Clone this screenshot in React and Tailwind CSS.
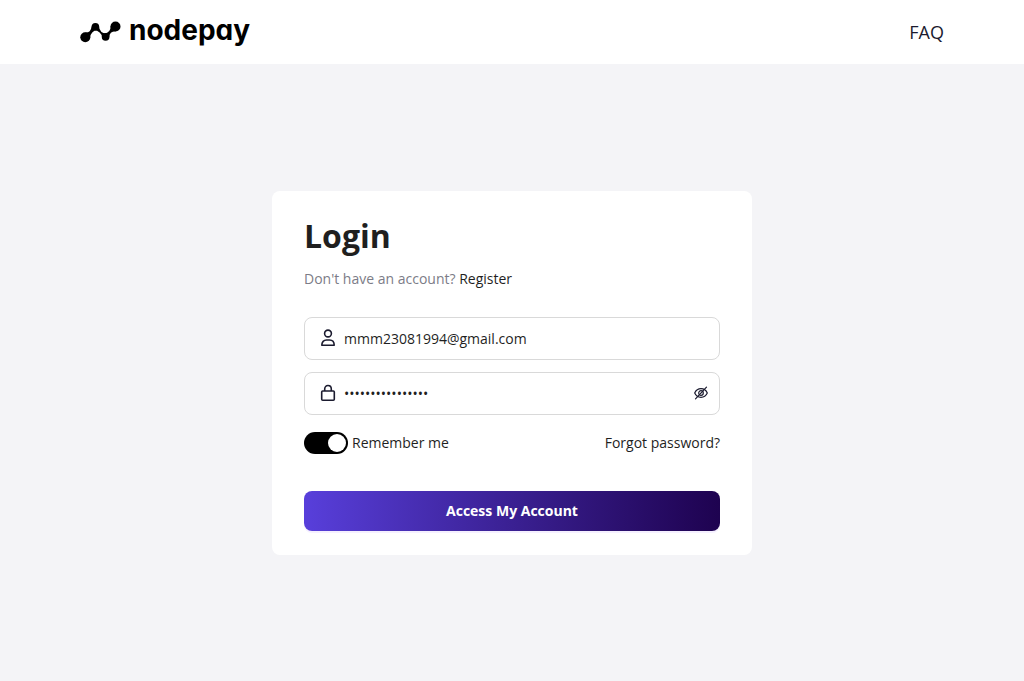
import { useState } from "react";

function Logo() {
  return (
    <a href="/" aria-label="nodepay" className="flex items-center gap-2 text-black">
      <svg width="41" height="22" viewBox="0 0 41 22" fill="currentColor" aria-hidden="true">
        <circle cx="5.3" cy="16.3" r="5" />
        <circle cx="15.4" cy="5.7" r="3.8" />
        <circle cx="25.6" cy="16" r="3.8" />
        <circle cx="35.5" cy="5.5" r="5" />
        <path d="M4.500 11.600Q10.500 12.500 11.700 5.500L18 8.500Q10.500 10 10 17Z" />
        <path d="M19 5.500Q19.500 12 26.500 12.500L22 16.500Q21.500 10 13.500 9Z" />
        <path d="M24.500 12.500Q30.500 12 30.800 5L36 10.300Q29.500 10 29.200 16.500Z" />
      </svg>
      <span className="pb-1 font-['Inter',sans-serif] text-[28px] leading-8 font-bold [font-feature-settings:'cv11']">
        nodepay
      </span>
    </a>
  );
}

function UserIcon() {
  return (
    <svg width="16" height="18" viewBox="0 0 16 18" fill="none" stroke="#1b1b2f" strokeWidth="1.6" strokeLinejoin="round" aria-hidden="true">
      <circle cx="8" cy="4.500" r="3.400" />
      <path d="M1.800 16.200C1.800 12.800 3.800 11 6.500 11H9.500C12.200 11 14.200 12.800 14.200 16.200Z" />
    </svg>
  );
}

function LockIcon() {
  return (
    <svg width="16" height="18" viewBox="0 0 16 18" fill="none" stroke="#1b1b2f" strokeWidth="1.6" strokeLinejoin="round" aria-hidden="true">
      <rect x="1.700" y="7" width="12.600" height="9.300" rx="1" />
      <path d="M4.700 7V5C4.700 2.900 6.100 1.500 8 1.500S11.300 2.900 11.300 5V7" />
    </svg>
  );
}

function EyeOffIcon() {
  return (
    <svg width="14" height="14" viewBox="0 0 14 14" fill="none" stroke="#1b1b2f" strokeWidth="1.200" strokeLinecap="round" aria-hidden="true">
      <path d="M0.700 7C2 4.200 4.200 2.700 7 2.700S12 4.200 13.300 7C12 9.800 9.800 11.300 7 11.300S2 9.800 0.700 7Z" />
      <circle cx="7" cy="7" r="2.300" />
      <path d="M12.500 1.200L1.500 12.800" />
    </svg>
  );
}

export default function App() {
  const [visible, setVisible] = useState(false);
  return (
    <div className="flex min-h-screen flex-col bg-[#f4f4f7] font-['Open_Sans',sans-serif] text-sm text-[#1f1f1f]">
      <header className="flex h-16 items-center justify-between bg-white px-20">
        <Logo />
        <a href="/faq" className="text-lg text-[#1b1b2f]">FAQ</a>
      </header>
      <main className="flex flex-1 items-center justify-center">
        <form className="w-full max-w-[480px] rounded-lg bg-white px-8 py-6" onSubmit={(e) => e.preventDefault()}>
          <h1 className="text-[32px] leading-[42px] font-bold">Login</h1>
          <p className="mt-[10px] leading-6 text-[#7c7c87]">
            Don't have an account? <a href="/register" className="text-[#1f1f1f]">Register</a>
          </p>
          <div className="mt-[26px] flex flex-col gap-3">
            <div className="flex h-[43px] items-center gap-2 rounded-lg border border-[#d9d9d9] px-[15px]">
              <UserIcon />
              <input type="email" aria-label="Email" defaultValue="mmm23081994@gmail.com" className="h-6 min-w-0 flex-1 bg-transparent outline-none" />
            </div>
            <div className="flex h-[43px] items-center gap-2 rounded-lg border border-[#d9d9d9] pr-[11px] pl-[15px]">
              <LockIcon />
              <input type={visible ? "text" : "password"} aria-label="Password" defaultValue="passwordpassword" className="h-6 min-w-0 flex-1 bg-transparent outline-none" />
              <button type="button" aria-label="Show password" onClick={() => setVisible(!visible)}>
                <EyeOffIcon />
              </button>
            </div>
          </div>
          <div className="mt-4 flex items-center justify-between">
            <label className="flex items-center gap-1">
              <input
                type="checkbox"
                role="switch"
                defaultChecked
                className="flex h-[22px] w-11 appearance-none items-center rounded-full bg-[#bfbfbf] px-0.5 before:size-[18px] before:rounded-full before:bg-white checked:justify-end checked:bg-black"
              />
              <span className="leading-6">Remember me</span>
            </label>
            <a href="/forgot-password" className="leading-6">Forgot password?</a>
          </div>
          <button type="submit" className="mt-9 h-10 w-full rounded-lg bg-linear-to-r from-[#583fdb] to-[#1e0350] font-bold text-white shadow-[0_2px_0_#f5f0ff]">
            Access My Account
          </button>
        </form>
      </main>
    </div>
  );
}
